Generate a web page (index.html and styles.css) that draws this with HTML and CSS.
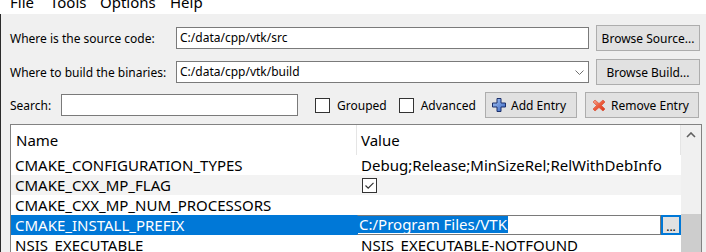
FILE: index.html
```html
<!DOCTYPE html>
<html lang="en">
<head>
    <meta charset="UTF-8">
    <title>CMake</title>
    <link rel="stylesheet" href="styles.css">
</head>
<body>

    <!-- menu -->
    <div class="menubar">
        <span>File</span>
        <span>Tools</span>
        <span>Options</span>
        <span>Help</span>
    </div>

    <div class="main">

        <!-- source / build paths -->
        <div class="paths">
            <label>Where is the source code:</label>
            <div class="field">C:/data/cpp/vtk/src</div>
            <button>Browse Source...</button>

            <label>Where to build the binaries:</label>
            <div class="field combo">
                <span>C:/data/cpp/vtk/build</span>
                <svg width="9" height="5" viewBox="0 0 9 5"><path d="M0.5 0.5 L4.5 4.5 L8.5 0.5" fill="none" stroke="#707070" stroke-width="1"/></svg>
            </div>
            <button>Browse Build...</button>
        </div>

        <!-- search + entries -->
        <div class="toolbar">
            <label class="search-label">Search:</label>
            <div class="field search"></div>
            <label class="check grouped"><span class="box"></span>Grouped</label>
            <label class="check advanced"><span class="box"></span>Advanced</label>
            <button class="tool-btn add">
                <svg width="14" height="14" viewBox="0 0 14 14">
                    <defs>
                        <linearGradient id="plus-fill" x1="0" y1="0" x2="1" y2="1">
                            <stop offset="0" stop-color="#a9c8f5"/>
                            <stop offset="1" stop-color="#3562c0"/>
                        </linearGradient>
                    </defs>
                    <path d="M5 0.5h4v4.5h4.5v4h-4.5v4.5h-4v-4.5h-4.5v-4h4.5z" fill="url(#plus-fill)" stroke="#1b2f6b" stroke-width="1"/>
                </svg>
                Add Entry
            </button>
            <button class="tool-btn remove">
                <svg width="14" height="13" viewBox="0 0 14 13">
                    <defs>
                        <linearGradient id="x-fill" x1="0" y1="0" x2="1" y2="1">
                            <stop offset="0" stop-color="#f7b09a"/>
                            <stop offset="0.5" stop-color="#ec5a3a"/>
                            <stop offset="1" stop-color="#d8361c"/>
                        </linearGradient>
                    </defs>
                    <path d="M1 3 L3 1 L7 4.5 L11 1 L13 3 L9.5 6.5 L13 10 L11 12 L7 8.5 L3 12 L1 10 L4.5 6.5 Z" fill="url(#x-fill)" stroke="#d9462a" stroke-width="0.6"/>
                </svg>
                Remove Entry
            </button>
        </div>

        <!-- cache entries -->
        <div class="cache">
            <div class="list">
                <div class="head">
                    <div class="name">Name</div>
                    <div class="value">Value</div>
                </div>
                <div class="row">
                    <div class="name">CMAKE_CONFIGURATION_TYPES</div>
                    <div class="value">Debug;Release;MinSizeRel;RelWithDebInfo</div>
                </div>
                <div class="row alt">
                    <div class="name">CMAKE_CXX_MP_FLAG</div>
                    <div class="value">
                        <span class="tick">
                            <svg width="13" height="13" viewBox="0 0 13 13"><path d="M2.5 6.5 L5.2 9.2 L10.5 3.8" fill="none" stroke="#333" stroke-width="1.2"/></svg>
                        </span>
                    </div>
                </div>
                <div class="row">
                    <div class="name">CMAKE_CXX_MP_NUM_PROCESSORS</div>
                    <div class="value"></div>
                </div>
                <div class="row selected">
                    <div class="name">CMAKE_INSTALL_PREFIX</div>
                    <div class="value editor">
                        <div class="edit"><span class="sel">C:/Program Files/VTK</span></div>
                        <div class="dots">...</div>
                    </div>
                </div>
                <div class="row">
                    <div class="name">NSIS_EXECUTABLE</div>
                    <div class="value">NSIS_EXECUTABLE-NOTFOUND</div>
                </div>
                <div class="row alt">
                    <div class="name">VTK_BUILD_ALL_MODULES</div>
                    <div class="value"></div>
                </div>
            </div>
            <div class="scrollbar">
                <div class="arrow">
                    <svg width="10" height="6" viewBox="0 0 10 6"><path d="M1 5 L5 1 L9 5" fill="none" stroke="#606060" stroke-width="1.6"/></svg>
                </div>
                <div class="track"></div>
                <div class="thumb"></div>
            </div>
        </div>

    </div>

</body>
</html>
```

FILE: styles.css
```css
/* window */
html, body {
    margin: 0;
    height: 252px;
    overflow: hidden;
}

body {
    background: #f0f0f0;
    font-family: "Noto Sans", "Open Sans", sans-serif;
    font-size: 12px;
    color: #000;
}

.menubar {
    display: grid;
    grid-template-columns: 40px 50px 70px auto;
    height: 14px;
    padding-left: 10px;
    background: #fff;
    overflow: hidden;
    font-size: 15px;
}

.menubar span {
    margin-top: -8px;
    line-height: 20px;
}

.main {
    height: 238px;
    box-sizing: border-box;
    border-left: 1px solid #2b2b2b;
    padding: 11px 4px 0 9px;
}

/* path rows */
.paths {
    display: grid;
    grid-template-columns: 159px 1fr 104px;
    grid-auto-rows: 26px;
    column-gap: 7px;
    row-gap: 8px;
    align-items: center;
    margin-right: 2px;
}

.paths label {
    white-space: nowrap;
}

.field {
    height: 22px;
    box-sizing: border-box;
    border: 1px solid #7a7a7a;
    background: #fff;
    padding: 0 3px;
    line-height: 20px;
    white-space: nowrap;
}

.combo {
    display: flex;
    justify-content: space-between;
    align-items: center;
    padding-right: 4px;
}

button {
    height: 26px;
    box-sizing: border-box;
    border: 1px solid #adadad;
    background: #e1e1e1;
    font: inherit;
    color: #000;
    padding: 0;
    white-space: nowrap;
}

/* search row */
.toolbar {
    display: flex;
    align-items: center;
    height: 26px;
    margin-top: 7px;
    margin-right: 3px;
}

.search-label {
    width: 51px;
}

.search {
    width: 237px;
}

.check {
    display: flex;
    align-items: center;
    gap: 7px;
}

.check .box {
    width: 15px;
    height: 15px;
    box-sizing: border-box;
    border: 1px solid #333;
    background: #fff;
}

.grouped {
    margin-left: 17px;
}

.advanced {
    margin-left: 12px;
}

.tool-btn {
    display: flex;
    align-items: center;
    gap: 5px;
    padding-left: 6px;
}

.add {
    width: 92px;
    margin-left: auto;
}

.remove {
    width: 114px;
    margin-left: 8px;
}

/* cache table */
.cache {
    display: flex;
    margin-top: 6px;
    height: 140px;
    border: 1px solid #828282;
    background: #fff;
    overflow: hidden;
    font-size: 15px;
}

.list {
    flex: 1;
}

.head {
    display: flex;
    height: 30px;
    line-height: 30px;
}

.row {
    display: flex;
    height: 20px;
    line-height: 20px;
    white-space: nowrap;
}

.name {
    width: 346px;
    flex: none;
    box-sizing: border-box;
    padding-left: 4px;
}

.value {
    flex: 1;
    padding-left: 4px;
}

.head .name {
    padding-left: 5px;
    border-right: 1px solid #e5e5e5;
}

.head .value {
    border-right: 1px solid #e5e5e5;
}

.alt {
    background: #f3f3f3;
}

.tick {
    display: inline-flex;
    width: 15px;
    height: 15px;
    box-sizing: border-box;
    border: 1px solid #333;
    background: #fff;
    margin: 3px 0 0 1px;
    vertical-align: top;
}

.selected .name {
    background: #0078d7;
    color: #fff;
}

.editor {
    display: flex;
    padding-left: 0;
}

.edit {
    flex: 1;
    height: 20px;
    box-sizing: border-box;
    border: 1px solid #7a7a7a;
    border-left-color: #0078d7;
    background: #fff;
    padding-left: 0;
}

.sel {
    display: inline-block;
    height: 17px;
    line-height: 17px;
    padding: 0 1px;
    background: #0078d7;
    color: #fff;
    vertical-align: top;
}

.dots {
    width: 20px;
    height: 20px;
    box-sizing: border-box;
    border: 2px solid #0078d7;
    background: #e1e1e1;
    font-size: 12px;
    line-height: 20px;
    text-align: center;
}

.scrollbar {
    width: 20px;
    display: flex;
    flex-direction: column;
    background: #f0f0f0;
}

.arrow {
    height: 20px;
    display: flex;
    align-items: center;
    justify-content: center;
}

.track {
    height: 69px;
}

.thumb {
    flex: 1;
    background: #cdcdcd;
}
```
